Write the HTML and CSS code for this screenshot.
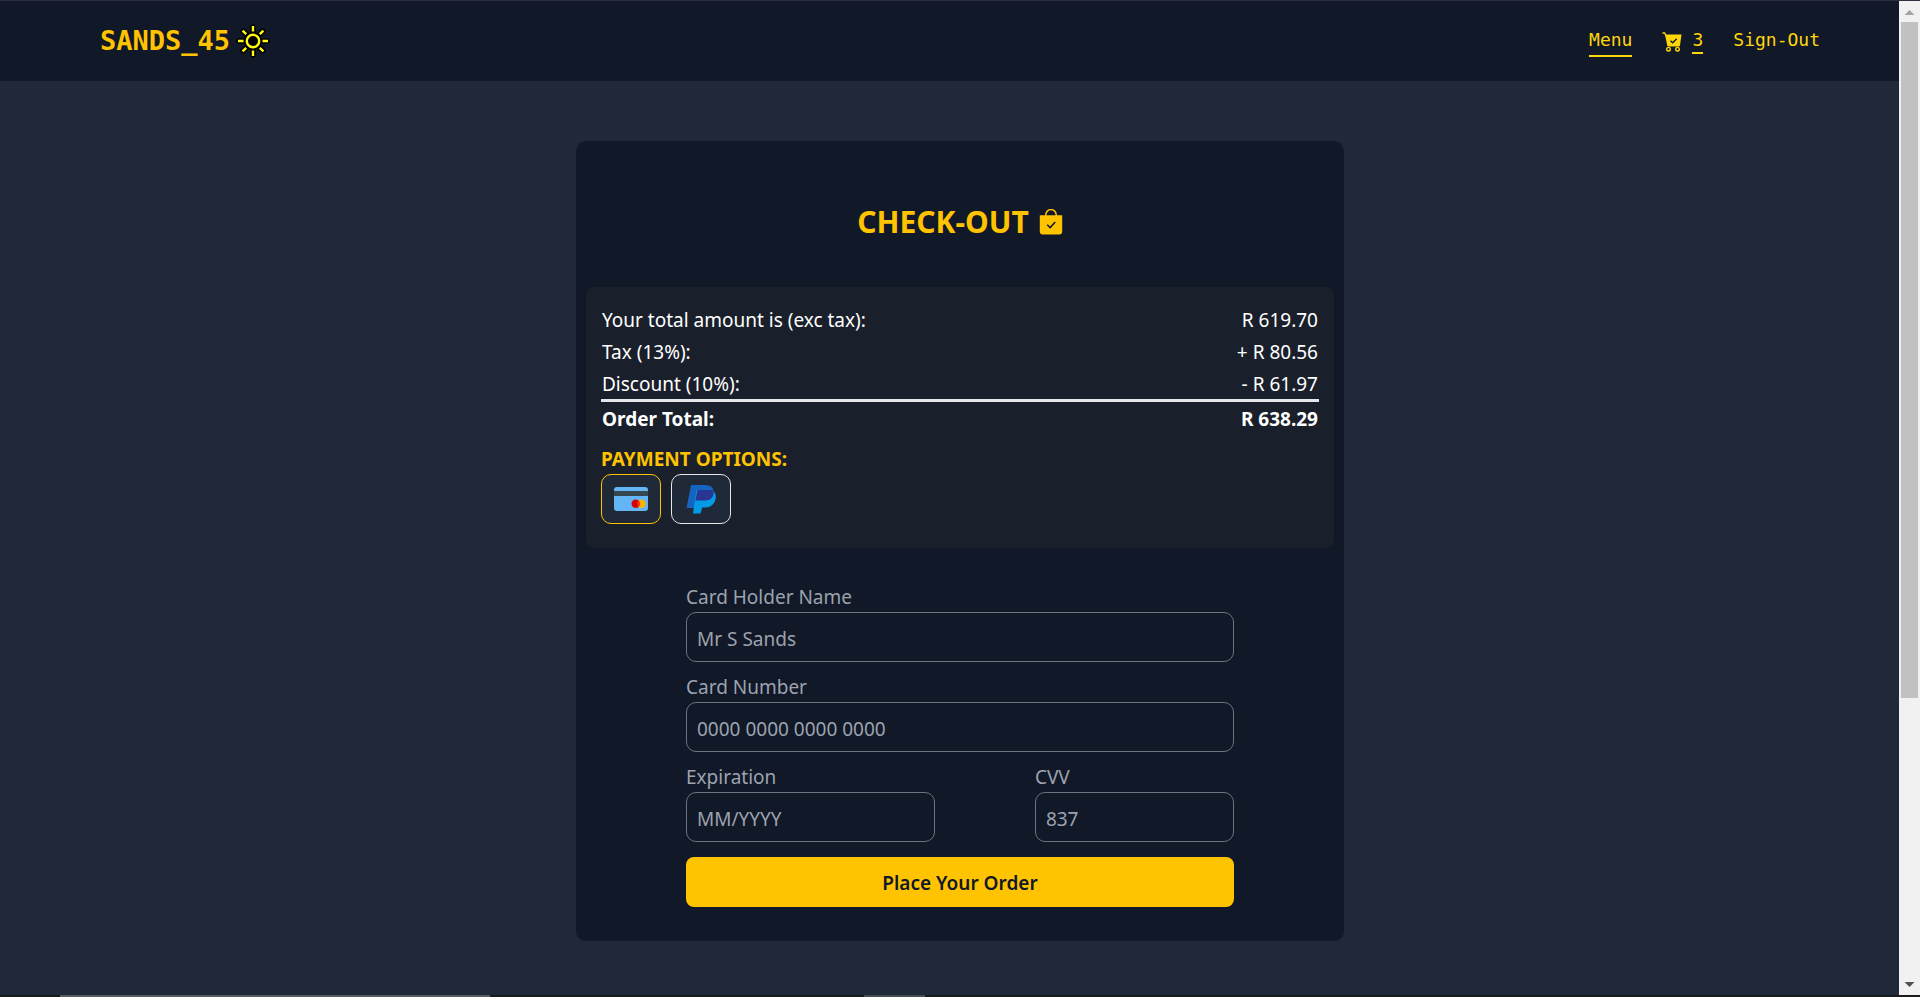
FILE: index.html
```html
<!DOCTYPE html>
<html lang="en">
<head>
<meta charset="utf-8">
<title>Check-out</title>
<link rel="stylesheet" href="styles.css">
</head>
<body>
<div class="page">
  <header class="topbar">
    <a class="brand" href="#">SANDS_45
      <svg class="sun" viewBox="0 0 34 34" fill="none" stroke-linecap="round" aria-hidden="true">
        <g stroke="#000" stroke-width="5.6">
          <circle cx="17" cy="17" r="6.2" fill="#000"/>
          <path d="M17 3v4M17 27v4M3 17h4M27 17h4M7.3 7.3l2.6 2.6M24.1 24.1l2.6 2.6M7.3 26.7l2.6-2.6M24.1 9.9l2.6-2.6"/>
        </g>
        <g stroke="#ffff0a" stroke-width="2.4" stroke-linecap="butt">
          <circle cx="17" cy="17" r="6.2"/>
          <path d="M17 2v5.500M17 26.500v5.500M2 17h5.500M26.500 17h5.500M6.600 6.600l3.600 3.600M23.800 23.800l3.600 3.600M6.600 27.400l3.600-3.600M23.800 10.200l3.600-3.600"/>
        </g>
      </svg>
    </a>
    <nav class="nav">
      <a class="nav-link current" href="#">Menu</a>
      <a class="nav-link cart" href="#">
        <svg class="cart-icon" viewBox="0 0 20 20" aria-hidden="true">
          <path d="M.5 1h2.200L4 4" fill="none" stroke="#ffd60a" stroke-width="1.300"/>
          <path d="M3 2.600h16.500L18 13.200q-.2 1.300-1.500 1.300H6.800q-1.300 0-1.600-1.300z" fill="#ffd60a"/>
          <circle cx="6.500" cy="17.200" r="1.800" fill="none" stroke="#ffd60a" stroke-width="1.400"/>
          <circle cx="15.500" cy="17.200" r="1.800" fill="none" stroke="#ffd60a" stroke-width="1.400"/>
          <path d="M8.500 8.700l2.200 2 4-4" fill="none" stroke="#111827" stroke-width="1.400"/>
        </svg>
        <span class="count">3</span>
      </a>
      <a class="nav-link" href="#">Sign-Out</a>
    </nav>
  </header>

  <main class="content">
    <section class="card">
      <h1 class="title">CHECK-OUT
        <svg class="bag" viewBox="0 0 24 26" aria-hidden="true">
          <path d="M6.800 7V5.800a5 5 0 0 1 10.400 0V7" fill="none" stroke="#ffc300" stroke-width="1.500"/>
          <path d="M.8 6.300h22.400V22.500a3 3 0 0 1-3 3H3.800a3 3 0 0 1-3-3z" fill="#ffc300"/>
          <path d="M8.200 15.800l3 2.800 5-5.600" fill="none" stroke="#111827" stroke-width="1.500"/>
        </svg>
      </h1>

      <div class="summary">
        <table class="totals">
          <tbody>
            <tr><td>Your total amount is (exc tax):</td><td class="amount">R 619.70</td></tr>
            <tr><td>Tax (13%):</td><td class="amount">+ R 80.56</td></tr>
            <tr><td>Discount (10%):</td><td class="amount">- R 61.97</td></tr>
          </tbody>
          <tfoot>
            <tr><th scope="row">Order Total:</th><td class="amount">R 638.29</td></tr>
          </tfoot>
        </table>
        <h2 class="options-title">PAYMENT OPTIONS:</h2>
        <div class="options">
          <button class="option selected" type="button" aria-label="Card">
            <svg class="option-icon" viewBox="0 0 40 40" aria-hidden="true">
              <rect x="3" y="8" width="34" height="24" rx="3" fill="#64b5f6"/>
              <path d="M3 12h34v5H3z" fill="#37474f"/>
              <circle cx="30.500" cy="24.800" r="4.200" fill="#ffb300"/>
              <circle cx="24.700" cy="24.800" r="4.200" fill="#d50000"/>
              <path d="M27.600 21.800a4.200 4.200 0 0 1 0 6 4.200 4.200 0 0 1 0-6z" fill="#ff3d00"/>
            </svg>
          </button>
          <button class="option" type="button" aria-label="PayPal">
            <svg class="option-icon" viewBox="0 0 40 40" aria-hidden="true">
              <path d="M10 6h14.500c5.500 0 9 3.500 8 8.500-1 5.500-4.500 8-9.500 8h-6L15 29H5.500z" fill="#1565c0"/>
              <path d="M15.500 11H29c5 1 6.500 4.500 5.500 9-1.200 5.500-5 8.500-10 8.500h-3.300L19.500 34.500H12z" fill="#039be5"/>
              <path d="M16.500 11h13.800q1 0 2 .5.600 1.500.2 3.500c-1 4.500-4 6.500-9 6.500H14.500z" fill="#283593"/>
            </svg>
          </button>
        </div>
      </div>

      <form class="form">
        <div class="field">
          <label for="holder">Card Holder Name</label>
          <input id="holder" type="text" placeholder="Mr S Sands">
        </div>
        <div class="field">
          <label for="number">Card Number</label>
          <input id="number" type="text" placeholder="0000 0000 0000 0000">
        </div>
        <div class="pair">
          <div class="field">
            <label for="expiration">Expiration</label>
            <input id="expiration" type="text" placeholder="MM/YYYY">
          </div>
          <div class="field">
            <label for="cvv">CVV</label>
            <input id="cvv" type="text" placeholder="837">
          </div>
        </div>
        <button class="submit" type="button">Place Your Order</button>
      </form>
    </section>
  </main>

  <div class="taskbar"><span class="task"></span><span class="task small"></span></div>

  <div class="scrollbar" aria-hidden="true">
    <span class="arrow up"></span>
    <span class="thumb"></span>
    <span class="arrow down"></span>
  </div>
</div>
</body>
</html>
```
FILE: styles.css
```css
* {
  box-sizing: border-box;
}

body {
  margin: 0;
  background: #1f2937;
  color: #fff;
  font-family: "Noto Sans", "Open Sans", sans-serif;
  font-size: 19px;
  line-height: 30px;
}

.page {
  position: relative;
  display: flex;
  flex-direction: column;
  min-height: 100vh;
  border-top: 1px solid #2e2e42;
}

.topbar {
  display: flex;
  align-items: center;
  justify-content: space-between;
  height: 80px;
  padding: 0 100px;
  background: #111827;
  font-family: "DejaVu Sans Mono", monospace;
}

.brand {
  display: flex;
  align-items: center;
  gap: 6px;
  color: #ffc300;
  font-size: 27px;
  font-weight: 700;
  text-decoration: none;
}

.sun {
  width: 34px;
  height: 34px;
}

.nav {
  display: flex;
  align-items: flex-start;
  gap: 30px;
  padding-top: 2px;
}

.nav-link {
  color: #ffd60a;
  font-size: 18px;
  line-height: 24px;
  text-decoration: none;
}

.current {
  padding-bottom: 3px;
  border-bottom: 2px solid #ffd60a;
}

.cart {
  display: flex;
  align-items: flex-start;
  gap: 10px;
}

.cart-icon {
  width: 20px;
  height: 20px;
  margin-top: 4px;
}

.count {
  border-bottom: 2px solid #ffd60a;
}

.content {
  flex: 1;
  padding: 60px 20px 54px;
}

.card {
  width: 100%;
  max-width: 768px;
  margin: 0 auto;
  padding: 60px 10px 34px;
  border-radius: 10px;
  background: #111827;
}

.title {
  display: flex;
  align-items: center;
  justify-content: center;
  gap: 10px;
  margin: 0 0 44px;
  color: #ffc300;
  font-size: 30px;
  line-height: 42px;
}

.bag {
  width: 24px;
  height: 26px;
}

.summary {
  padding: 16px 15px 24px;
  border-radius: 8px;
  background: #1a202b;
}

.totals {
  width: 100%;
  border-collapse: collapse;
}

.totals td,
.totals th {
  padding: 2px 1px 0;
  text-align: left;
}

.totals tfoot {
  border-top: 3px solid #e5e7eb;
  font-weight: 700;
}

.totals .amount {
  text-align: right;
}

.options-title {
  margin: 10px 0 0;
  color: #ffc300;
  font-size: 19px;
  line-height: 30px;
}

.options {
  display: flex;
  gap: 10px;
}

.option {
  display: flex;
  align-items: center;
  justify-content: center;
  width: 60px;
  height: 50px;
  padding: 0;
  border: 1px solid #e5e7eb;
  border-radius: 10px;
  background: #1f2937;
}

.selected {
  border-color: #ffc300;
}

.option-icon {
  width: 40px;
  height: 40px;
}

.form {
  display: flex;
  flex-direction: column;
  gap: 10px;
  padding: 34px 100px 0;
  color: #9ca3af;
}

.field {
  display: flex;
  flex-direction: column;
  min-width: 0;
}

.field input {
  width: 100%;
  height: 50px;
  padding: 3px 10px 0;
  border: 1px solid #6b7280;
  border-radius: 10px;
  background: transparent;
  color: #fff;
  font: inherit;
}

.field input::placeholder {
  color: #9ca3af;
  opacity: 1;
}

.pair {
  display: grid;
  grid-template-columns: 5fr 4fr;
  gap: 100px;
}

.submit {
  height: 50px;
  margin-top: 5px;
  padding: 2px 10px 0;
  border: 0;
  border-radius: 8px;
  background: #ffc300;
  color: #111827;
  font: inherit;
  font-weight: 600;
}

.taskbar {
  display: flex;
  gap: 374px;
  height: 2px;
  padding-left: 60px;
  background: #1b1b1d;
}

.task {
  width: 430px;
  background: #5a5c60;
}

.small {
  width: 61px;
  background: #4a4c50;
}

.scrollbar {
  position: absolute;
  top: 0;
  right: 0;
  bottom: 2px;
  display: flex;
  flex-direction: column;
  align-items: center;
  width: 21px;
  background: #f1f1f1;
}

.arrow {
  flex: none;
  width: 10px;
  height: 5px;
  background: #a3a3a3;
  clip-path: polygon(50% 0, 100% 100%, 0 100%);
}

.up {
  margin: 9px 0 7px;
}

.down {
  margin: auto 0 8px;
  background: #505050;
  clip-path: polygon(0 0, 100% 0, 50% 100%);
}

.thumb {
  width: 17px;
  height: 68%;
  background: #c1c1c1;
}
```
